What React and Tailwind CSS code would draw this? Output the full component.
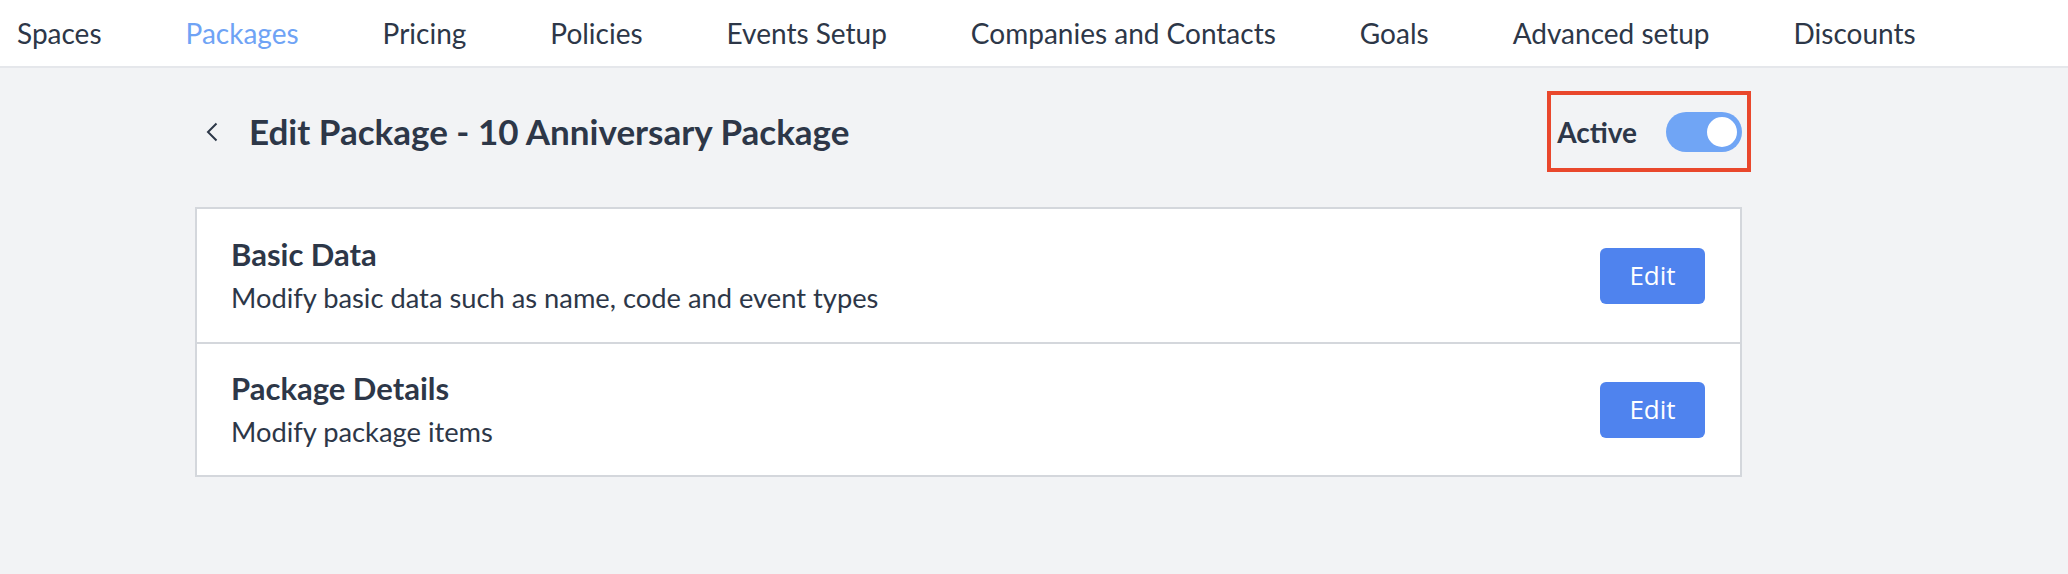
import React, { useState } from 'react';

const navItems = ['Spaces', 'Packages', 'Pricing', 'Policies', 'Events Setup', 'Companies and Contacts', 'Goals', 'Advanced setup', 'Discounts'];

const sections = [
    { title: 'Basic Data', text: 'Modify basic data such as name, code and event types' },
    { title: 'Package Details', text: 'Modify package items' },
];

const Toggle = ({ on, onChange }) => (
    <button
        onClick={() => onChange(!on)}
        className={`relative w-[76px] h-[40px] rounded-full ${on ? 'bg-[#70a5f5]' : 'bg-[#d1d5db]'}`}
    >
        <span
            className={`absolute top-[3px] w-[34px] h-[34px] rounded-full bg-white border-2 border-[#70a5f5] ${on ? 'right-[3px]' : 'left-[3px]'}`}
        />
    </button>
);

const App = () => {
    const [active, setActive] = useState(true);

    return (
        <div className="min-h-[574px] bg-[#f2f3f5] text-[#2d3748]" style={{ fontFamily: 'Lato, "Noto Sans", sans-serif' }}>
            <nav className="h-[68px] bg-white border-b-2 border-[#e5e7eb] flex items-center pl-[17px] gap-[84px] text-[28px]">
                {navItems.map((item) => (
                    <span key={item} className={item === 'Packages' ? 'text-[#6fa3f5]' : ''}>{item}</span>
                ))}
            </nav>

            <div className="ml-[195px] w-[1547px]">
                <div className="mt-[23px] flex items-center justify-between">
                    <div className="flex items-center pl-[11px] gap-[31px]">
                        <svg width="12" height="20" viewBox="0 0 12 20" fill="none">
                            <polyline points="10.5,1.5 2,10 10.5,18.5" stroke="#2d3748" strokeWidth="2" />
                        </svg>
                        <h1 className="text-[35px] font-bold">Edit Package - 10 Anniversary Package</h1>
                    </div>
                    <div className="-mr-[9px] h-[81px] border-4 border-[#e9472c] flex items-center pl-[6px] pr-[5px] gap-[29px]">
                        <span className="text-[28px] font-bold">Active</span>
                        <Toggle on={active} onChange={setActive} />
                    </div>
                </div>

                <div className="mt-[35px] bg-white border-2 border-[#d4d7dc]">
                    {sections.map((s, idx) => (
                        <div
                            key={s.title}
                            className={`h-[133px] flex items-center justify-between pl-[34px] pr-[35px] ${idx > 0 ? 'border-t-2 border-[#d4d7dc]' : ''}`}
                        >
                            <div>
                                <h2 className="text-[31px] font-bold leading-[44px]">{s.title}</h2>
                                <p className="text-[27.3px] leading-[44px]">{s.text}</p>
                            </div>
                            <button
                                className="w-[105px] h-[56px] rounded-[6px] bg-[#4f83ee] text-white text-[26px]"
                                style={{ fontFamily: '"Open Sans", "Noto Sans", sans-serif' }}
                            >
                                Edit
                            </button>
                        </div>
                    ))}
                </div>
            </div>
        </div>
    );
};

export default App;
